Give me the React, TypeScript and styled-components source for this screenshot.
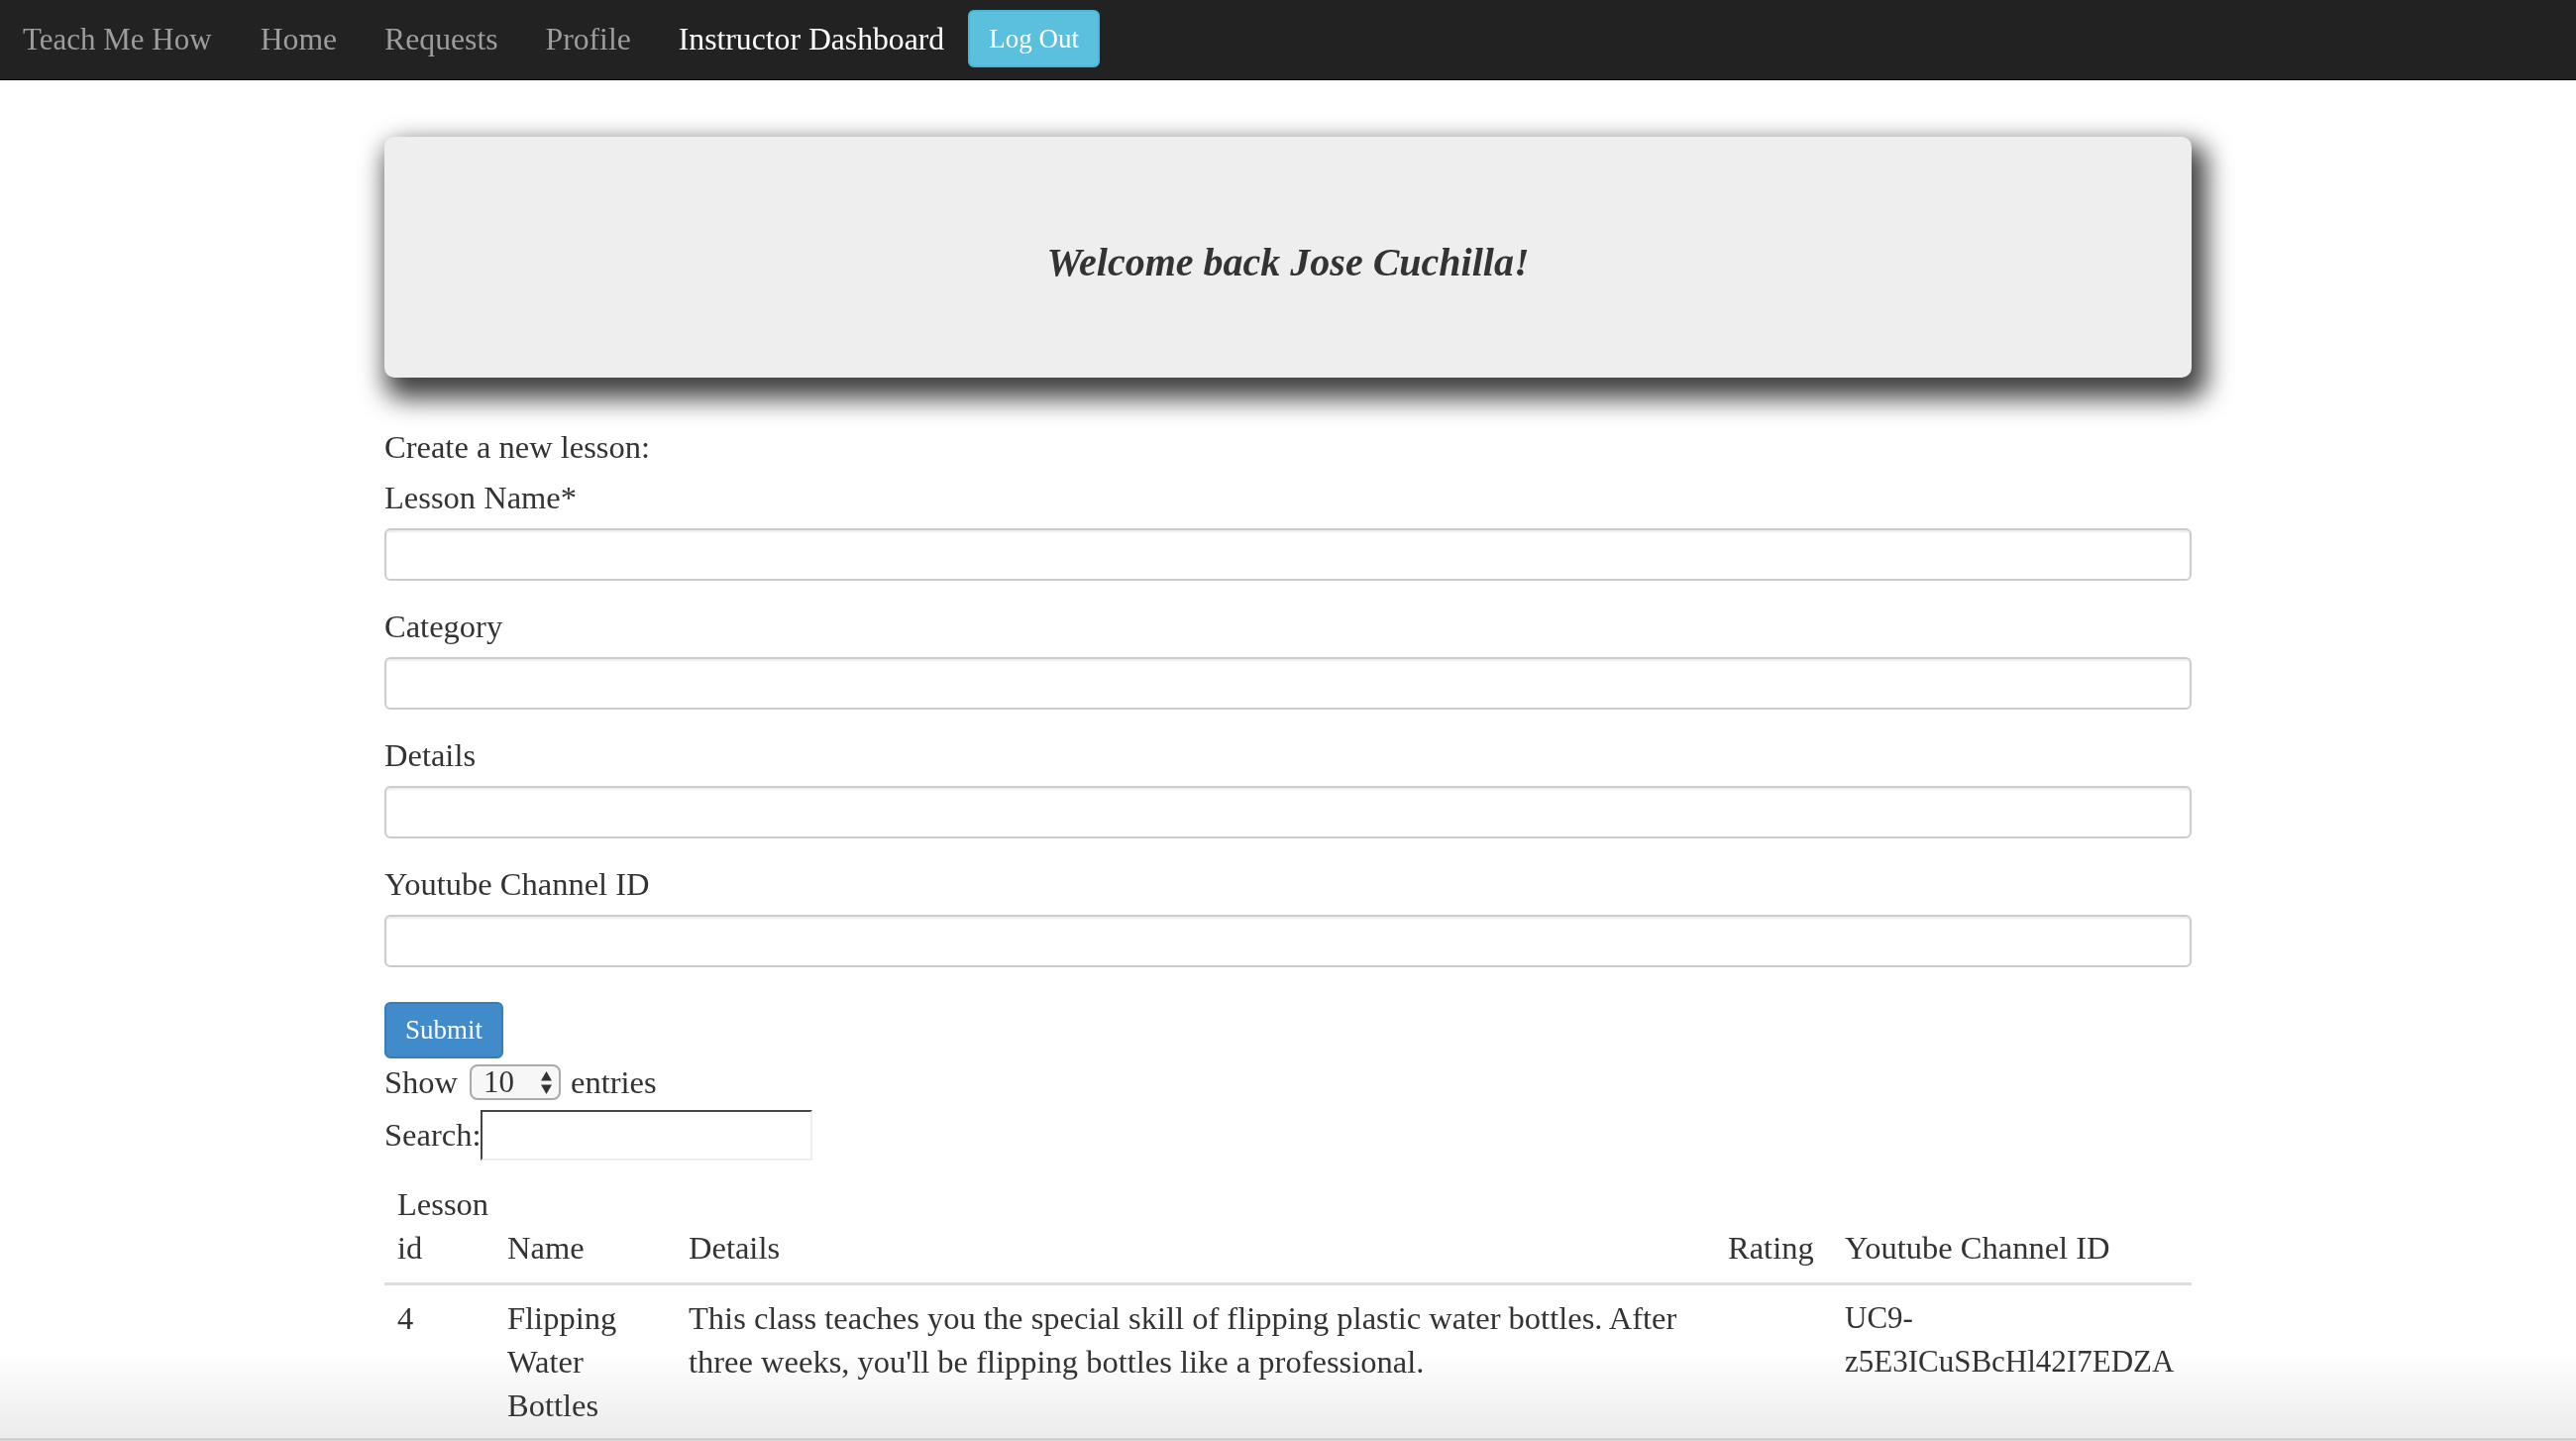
import styled, { createGlobalStyle } from "styled-components"

const GlobalStyle = createGlobalStyle`
  html {
    background: #fff;
  }
  html, body {
    margin: 0;
    padding: 0;
    color: #333;
    font-family: "Liberation Serif", "Times New Roman", serif;
    font-size: 32.5px;
    line-height: 44px;
  }
  body { overflow: hidden; }
  * { box-sizing: border-box; }
`

const Navbar = styled.nav`
  height: 81px;
  background: #222;
  border-bottom: 1px solid #080808;
  display: flex;
  align-items: center;
`

const Brand = styled.a`
  color: #9d9d9d;
  font-size: 31px;
  padding: 0 25px 0 23px;
  text-decoration: none;
`

const NavLink = styled.a<{ $active?: boolean }>`
  color: ${({ $active }) => ($active ? "#fff" : "#9d9d9d")};
  font-size: 31.7px;
  padding: 0 24px;
  text-decoration: none;
`

const LogOutButton = styled.button`
  height: 58px;
  padding: 0 19px;
  margin-top: -2px;
  background: #5bc0de;
  border: 2px solid #46b8da;
  border-radius: 6px;
  color: #fff;
  font-family: inherit;
  font-size: 27px;
`

const Container = styled.main`
  width: 1824px;
  margin: 0 auto;
  padding-top: 57px;
`

const Jumbotron = styled.section`
  height: 243px;
  background: #eee;
  border-radius: 10px;
  box-shadow: 8px 14px 26px 7px rgba(0, 0, 0, 0.75);
  display: flex;
  align-items: center;
  justify-content: center;
  padding-top: 10px;
`

const Welcome = styled.h1`
  margin: 0;
  font-size: 40px;
  font-style: italic;
  font-weight: bold;
  color: #333;
`

const Intro = styled.p`
  margin: 48px 0 7px;
`

const FormGroup = styled.div`
  margin-bottom: 24px;
`

const Label = styled.label`
  display: block;
  margin-bottom: 9px;
`

const TextInput = styled.input`
  display: block;
  width: 100%;
  height: 53px;
  border: 2px solid #ccc;
  border-radius: 6px;
  box-shadow: inset 0 2px 2px rgba(0, 0, 0, 0.075);
  background: #fff;
`

const SubmitButton = styled.button`
  height: 57px;
  padding: 0 19px;
  margin-top: 35px;
  background: #428bca;
  border: 2px solid #357ebd;
  border-radius: 6px;
  color: #fff;
  font-family: inherit;
  font-size: 27px;
  display: block;
`

const LengthRow = styled.div`
  display: flex;
  align-items: center;
  gap: 10px;
  height: 48px;
`

const SelectBox = styled.div`
  width: 92px;
  height: 36px;
  margin-left: 2px;
  border: 2px solid #aaa;
  border-radius: 8px;
  background: #f7f7f7;
  display: flex;
  align-items: center;
  justify-content: space-between;
  padding: 0 6px 0 12px;
  font-size: 31px;
`

const SearchRow = styled.div`
  display: flex;
  align-items: center;
  height: 58px;
`

const SearchInput = styled.input`
  width: 335px;
  height: 51px;
  border: 2px inset #eee;
  border-top-color: #999;
  border-left-color: #999;
  background: #fff;
`

const Table = styled.table`
  width: 100%;
  margin-top: 6px;
  border-collapse: collapse;
  table-layout: fixed;
`

const Th = styled.th<{ $w: number }>`
  width: ${({ $w }) => $w}px;
  text-align: left;
  font-weight: normal;
  vertical-align: bottom;
  padding: 13px;
  border-bottom: 3px solid #ddd;
`

const Td = styled.td<{ $small?: boolean }>`
  vertical-align: top;
  padding: 11px 13px;
  font-size: ${({ $small }) => ($small ? "31px" : "inherit")};
  word-wrap: break-word;
`

const BottomFade = styled.div`
  position: fixed;
  left: 0;
  right: 0;
  bottom: 0;
  height: 90px;
  z-index: -1;
  pointer-events: none;
  background: linear-gradient(to bottom, rgba(255, 255, 255, 0), #ebebeb);
  border-bottom: 3px solid #cfcfcf;
`

function Arrows() {
  return (
    <svg width="13" height="25" viewBox="0 0 13 25">
      <path d="M6.5 1 L12 10.5 L1 10.5 Z" fill="#333" />
      <path d="M6.5 24 L12 14.5 L1 14.5 Z" fill="#333" />
    </svg>
  )
}

const fields = ["Lesson Name*", "Category", "Details", "Youtube Channel ID"]

export default function App() {
  return (
    <>
      <GlobalStyle />
      <Navbar>
        <Brand>Teach Me How</Brand>
        <NavLink>Home</NavLink>
        <NavLink>Requests</NavLink>
        <NavLink>Profile</NavLink>
        <NavLink $active>Instructor Dashboard</NavLink>
        <LogOutButton>Log Out</LogOutButton>
      </Navbar>

      <Container>
        <Jumbotron>
          <Welcome>Welcome back Jose Cuchilla!</Welcome>
        </Jumbotron>

        <Intro>Create a new lesson:</Intro>
        {fields.map((f) => (
          <FormGroup key={f}>
            <Label>{f}</Label>
            <TextInput type="text" />
          </FormGroup>
        ))}
        <SubmitButton>Submit</SubmitButton>

        <LengthRow>
          Show
          <SelectBox>
            <span>10</span>
            <Arrows />
          </SelectBox>
          entries
        </LengthRow>
        <SearchRow>
          Search:<SearchInput type="search" />
        </SearchRow>

        <Table>
          <thead>
            <tr>
              <Th $w={111}>Lesson id</Th>
              <Th $w={183}>Name</Th>
              <Th $w={1049}>Details</Th>
              <Th $w={118}>Rating</Th>
              <Th $w={363}>Youtube Channel ID</Th>
            </tr>
          </thead>
          <tbody>
            <tr>
              <Td>4</Td>
              <Td>Flipping Water Bottles</Td>
              <Td>
                This class teaches you the special skill of flipping plastic water bottles. After three weeks, you'll be
                flipping bottles like a professional.
              </Td>
              <Td></Td>
              <Td $small>UC9-z5E3ICuSBcHl42I7EDZA</Td>
            </tr>
          </tbody>
        </Table>
      </Container>
      <BottomFade />
    </>
  )
}
